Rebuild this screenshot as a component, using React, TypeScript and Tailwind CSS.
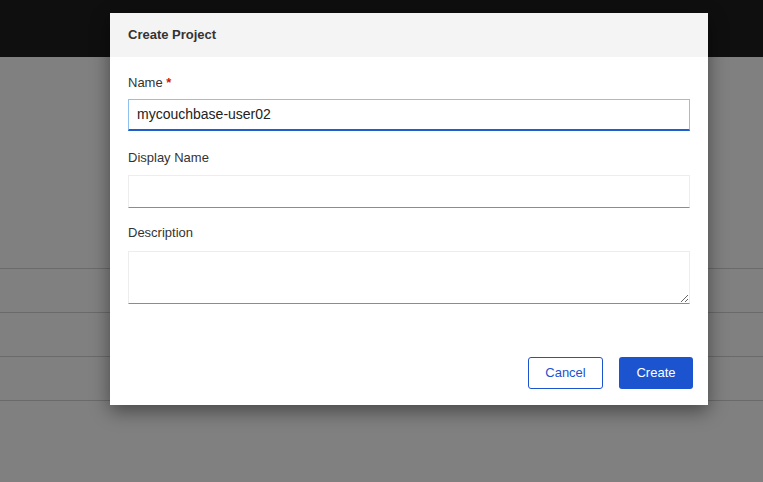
import { useState } from 'react';

export default function App() {
  const [name, setName] = useState('mycouchbase-user02');

  return (
    <div className="relative h-[482px] w-full overflow-hidden bg-[#808080] font-['Liberation_Sans',sans-serif]">
      <div className="h-[57px] bg-[#0f0f0f]" />
      <div className="mt-[211px]">
        <div className="h-[44px] border-t border-[#6a6a6a]" />
        <div className="h-[44px] border-t border-[#6a6a6a]" />
        <div className="h-[44px] border-t border-[#6a6a6a]" />
        <div className="border-t border-[#6a6a6a]" />
      </div>

      <div className="absolute left-[110px] top-[13px] w-[598px] bg-white shadow-[0_6px_18px_rgba(0,0,0,0.45)]">
        <div className="flex h-[44px] items-center bg-[#f4f4f4] px-[18px]">
          <h2 className="text-[13px] font-bold text-[#333]">Create Project</h2>
        </div>

        <div className="px-[18px] pt-[16px]">
          <label className="block text-[13px] font-medium text-[#333]">
            Name <span className="font-bold text-[#c9190b]">*</span>
          </label>
          <input
            value={name}
            onChange={(e) => setName(e.target.value)}
            className="mt-[6px] h-[32px] w-full border border-[#8fc1ef] border-b-2 border-b-[#1f5fcc] px-[8px] text-[14px] text-[#222] outline-none"
          />

          <label className="mt-[17px] block text-[13px] font-medium text-[#333]">Display Name</label>
          <input className="mt-[8px] h-[33px] w-full border border-[#ededed] border-b-[#8a8d90] px-[8px] text-[14px] outline-none" />

          <label className="mt-[15px] block text-[13px] font-medium text-[#333]">Description</label>
          <textarea className="mt-[8px] block h-[53px] w-full border border-[#ededed] border-b-[#8a8d90] px-[8px] text-[14px] outline-none" />
        </div>

        <div className="flex justify-end gap-[16px] px-[15px] pb-[16px] pt-[53px]">
          <button className="h-[32px] w-[75px] rounded-[3px] border border-[#1c53cf] text-[13px] text-[#1c53cf]">
            Cancel
          </button>
          <button className="h-[32px] w-[74px] rounded-[3px] bg-[#1c53cf] text-[13px] text-white">
            Create
          </button>
        </div>
      </div>
    </div>
  );
}
